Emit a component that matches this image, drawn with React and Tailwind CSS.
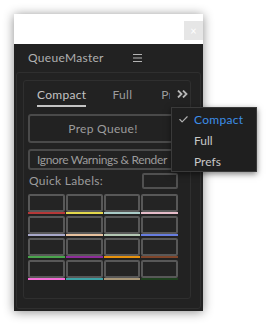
import { Check } from 'lucide-react';

// After Effects style label colours, row by row
const LABELS = [
  '#b53838', '#e4d84c', '#a9cbc7', '#e5bcc9',
  '#a9a9ca', '#e7c19e', '#b3c7b3', '#677de0',
  '#4aa44c', '#8e2c9a', '#e8920d', '#7f452a',
  '#f46dd6', '#3da2a5', '#a89677', '#1e401e',
];

function LabelCell({ color }) {
  return (
    <div className="flex flex-col">
      <div className="h-[18px] border-2 border-[#585858] rounded-[2px] bg-[#242424]" />
      <div className="h-[2px]" style={{ backgroundColor: color }} />
    </div>
  );
}

function Hamburger() {
  return (
    <svg width="9" height="8" viewBox="0 0 9 8" className="text-[#b4b4b4]">
      <path d="M0 0.5H9M0 4H9M0 7.5H9" stroke="currentColor" strokeWidth="1" />
    </svg>
  );
}

function Chevrons() {
  return (
    <svg width="11" height="8" viewBox="0 0 11 8" className="text-[#b8b8b8]">
      <path d="M1 0.5L4.5 4L1 7.5M6 0.5L9.5 4L6 7.5" fill="none" stroke="currentColor" strokeWidth="1.8" />
    </svg>
  );
}

function DropMenu() {
  return (
    <div className="absolute left-[171px] top-[107px] w-[86px] h-[65px] bg-[#1f1f1f] border border-[#3a3a3a] shadow-[0_2px_6px_rgba(0,0,0,0.5)] pt-[1px] text-[12px]">
      <div className="h-[21px] flex items-center">
        <Check className="w-[11px] h-[11px] text-[#b0b0b0] ml-[6px]" strokeWidth={2.5} />
        <span className="ml-[5px] text-[#3d8ee8] tracking-[0.3px]">Compact</span>
      </div>
      <div className="h-[21px] flex items-center pl-[22px] text-[#c8c8c8]">Full</div>
      <div className="h-[21px] flex items-center pl-[22px] text-[#c8c8c8]">Prefs</div>
    </div>
  );
}

export default function App() {
  return (
    <div className="relative w-[272px] h-[326px] bg-white overflow-hidden" style={{ fontFamily: 'Lato, "Noto Sans", sans-serif' }}>
      <div className="ml-[14px] mt-[14px] w-[189px] shadow-[0_1px_10px_rgba(0,0,0,0.45)]">
        {/* title bar */}
        <div className="h-[30px] bg-white flex justify-end items-start pt-[7px]">
          <div className="w-[19px] h-[19px] bg-[#e6e6e6] flex items-center justify-center text-white text-[11px] leading-none">×</div>
        </div>
        {/* body */}
        <div className="bg-[#222222] h-[267px] px-[2px] pb-[2px] flex flex-col">
          <div className="h-[28px] flex items-center pl-[12px] text-[12px] text-[#b0b0b0] tracking-[0.3px]">
            <span>QueueMaster</span>
            <span className="ml-[29px]"><Hamburger /></span>
          </div>
          <div className="flex-1 border border-[#2f2f2f] rounded-[3px] pl-[6px] pr-[9px] pt-[7px] pb-[9px] flex">
            <div className="flex-1 border border-[#2f2f2f] rounded-[3px] pl-[4px] flex flex-col">
              {/* tabs */}
              <div className="h-[27px] flex items-start pt-[5px] text-[12px] tracking-[0.3px]">
                <div className="w-[142px] overflow-hidden flex whitespace-nowrap">
                  <div className="ml-[9px] flex flex-col items-stretch">
                    <span className="text-[#c4c4c4] leading-[17px]">Compact</span>
                    <div className="h-[2px] mt-[2px] bg-[#c4c4c4]" />
                  </div>
                  <span className="ml-[26px] text-[#9c9c9c] leading-[17px]">Full</span>
                  <span className="ml-[29px] text-[#9c9c9c] leading-[17px]">Prefs</span>
                </div>
                <div className="ml-[7px] mt-[4px]"><Chevrons /></div>
              </div>
              <div className="w-[150px] flex flex-col mt-[6px] text-[12px] text-[#9c9c9c]">
                <div className="h-[29px] border-2 border-[#4a4a4a] rounded-[3px] flex items-center justify-center tracking-[0.3px]">Prep Queue!</div>
                <div className="h-[21px] mt-[6px] border-2 border-[#4a4a4a] rounded-[3px] flex items-center pl-[7px] whitespace-nowrap tracking-[-0.35px]">Ignore Warnings &amp; Render</div>
                <div className="h-[16px] mt-[3px] flex items-center justify-between tracking-[0.3px]">
                  <span className="pl-[1px]">Quick Labels:</span>
                  <div className="w-[36px] h-[16px] border-2 border-[#505050] rounded-[2px]" />
                </div>
                <div className="mt-[5px] grid grid-cols-4 gap-x-[1px] gap-y-[2px]">
                  {LABELS.map((c, i) => <LabelCell key={i} color={c} />)}
                </div>
              </div>
            </div>
          </div>
        </div>
      </div>
      <DropMenu />
    </div>
  );
}
